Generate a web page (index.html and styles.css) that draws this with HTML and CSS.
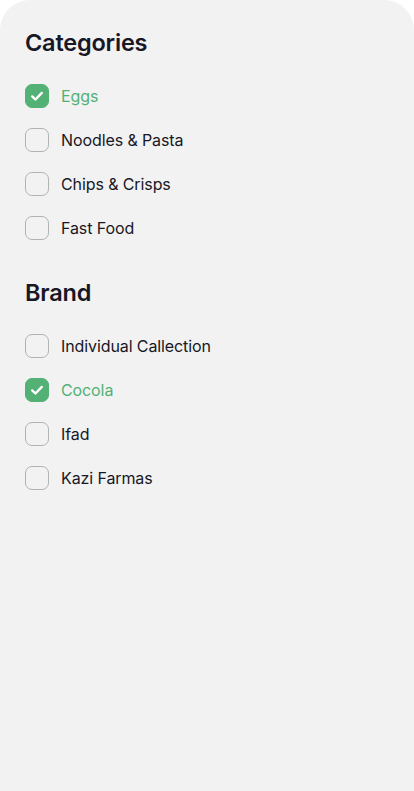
FILE: index.html
```html
<!DOCTYPE html>
<html lang="en">
<head>
<meta charset="utf-8">
<title>Filters</title>
<link rel="stylesheet" href="styles.css">
</head>
<body>
<div class="card">
  <section class="group">
    <h2 class="title">Categories</h2>
    <ul class="list">
      <li class="item checked"><span class="box"><svg viewBox="0 0 24 24" width="24" height="24"><path d="M7.2 12.4l3.2 3.1 6.4-6.6" fill="none" stroke="#fff" stroke-width="2.4" stroke-linecap="round" stroke-linejoin="round"/></svg></span><span class="label">Eggs</span></li>
      <li class="item"><span class="box"></span><span class="label">Noodles &amp; Pasta</span></li>
      <li class="item"><span class="box"></span><span class="label">Chips &amp; Crisps</span></li>
      <li class="item"><span class="box"></span><span class="label">Fast Food</span></li>
    </ul>
  </section>
  <section class="group">
    <h2 class="title">Brand</h2>
    <ul class="list">
      <li class="item"><span class="box"></span><span class="label">Individual Callection</span></li>
      <li class="item checked"><span class="box"><svg viewBox="0 0 24 24" width="24" height="24"><path d="M7.2 12.4l3.2 3.1 6.4-6.6" fill="none" stroke="#fff" stroke-width="2.4" stroke-linecap="round" stroke-linejoin="round"/></svg></span><span class="label">Cocola</span></li>
      <li class="item"><span class="box"></span><span class="label">Ifad</span></li>
      <li class="item"><span class="box"></span><span class="label">Kazi Farmas</span></li>
    </ul>
  </section>
</div>
</body>
</html>
```
FILE: styles.css
```css
* { box-sizing: border-box; }
html, body { margin: 0; padding: 0; background: #ffffff; }
body { font-family: "Inter", "Open Sans", sans-serif; color: #181725; }
.card {
  min-height: 791px;
  background: #f2f2f2;
  border-radius: 30px 30px 0 0;
  padding: 29px 25px 25px;
}
.group + .group { margin-top: 39px; }
.title {
  margin: 0;
  font-size: 23.5px;
  line-height: 28px;
  font-weight: 600;
  letter-spacing: -0.2px;
  color: #181725;
}
.list {
  list-style: none;
  margin: 27px 0 0;
  padding: 0;
  display: flex;
  flex-direction: column;
  gap: 20px;
}
.item {
  display: flex;
  align-items: center;
  gap: 12px;
  height: 24px;
}
.box {
  width: 24px;
  height: 24px;
  border: 1.5px solid #b3b3b3;
  border-radius: 7px;
  flex: none;
  display: flex;
  align-items: center;
  justify-content: center;
}
.checked .box {
  background: #53b175;
  border-color: #53b175;
}
.box svg { display: block; flex: none; }
.label {
  font-size: 16px;
  font-weight: 400;
  color: #181725;
  letter-spacing: -0.1px;
}
.checked .label { color: #53b175; }
```
